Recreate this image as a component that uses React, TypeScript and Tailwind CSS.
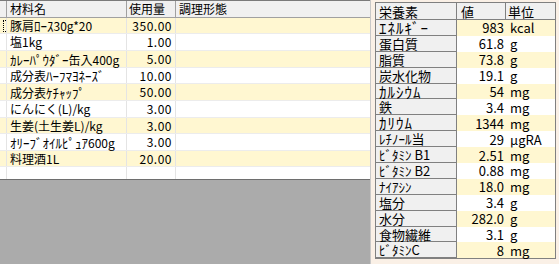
import React from "react";

const leftRows = [
  { name: "豚肩ﾛｰｽ30g*20", qty: "350.00", h: "h-[16px]" },
  { name: "塩1kg", qty: "1.00", h: "h-[17px]" },
  { name: "ｶﾚｰﾊﾟｳﾀﾞｰ缶入400g", qty: "5.00", h: "h-[17px]" },
  { name: "成分表ﾊｰﾌﾏﾖﾈｰｽﾞ", qty: "10.00", h: "h-[16px]" },
  { name: "成分表ｹﾁｬｯﾌﾟ", qty: "50.00", h: "h-[17px]" },
  { name: "にんにく(L)/kg", qty: "3.00", h: "h-[17px]" },
  { name: "生姜(土生姜L)/kg", qty: "3.00", h: "h-[16px]" },
  { name: "ｵﾘｰﾌﾞｵｲﾙﾋﾟｭｱ600g", qty: "3.00", h: "h-[17px]" },
  { name: "料理酒1L", qty: "20.00", h: "h-[16px]" },
];

const wide = "text-[15px] tracking-[1px]";
const narrow = "text-[13px]";

const nutrients = [
  { n: "ｴﾈﾙｷﾞｰ", v: "983", u: "kcal", k: wide },
  { n: "蛋白質", v: "61.8", u: "g", k: wide },
  { n: "脂質", v: "73.8", u: "g", k: wide },
  { n: "炭水化物", v: "19.1", u: "g", k: wide },
  { n: "ｶﾙｼｳﾑ", v: "54", u: "mg", k: wide },
  { n: "鉄", v: "3.4", u: "mg", k: wide },
  { n: "ｶﾘｳﾑ", v: "1344", u: "mg", k: wide },
  { n: "ﾚﾁﾉｰﾙ当", v: "29", u: "μgRA", k: narrow },
  { n: "ﾋﾞﾀﾐﾝ B1", v: "2.51", u: "mg", k: narrow },
  { n: "ﾋﾞﾀﾐﾝ B2", v: "0.88", u: "mg", k: narrow },
  { n: "ﾅｲｱｼﾝ", v: "18.0", u: "mg", k: narrow },
  { n: "塩分", v: "3.4", u: "g", k: wide },
  { n: "水分", v: "282.0", u: "g", k: wide },
  { n: "食物繊維", v: "3.1", u: "g", k: wide },
  { n: "ﾋﾞﾀﾐﾝC", v: "8", u: "mg", k: narrow },
];

function Kana({ text, cls }: { text: string; cls: string }) {
  const parts = text.split(/([\uFF61-\uFF9F]+)/);
  return (
    <>
      {parts.map((p, i) =>
        /^[\uFF61-\uFF9F]+$/.test(p) ? (
          <span key={i} className={cls}>
            {p}
          </span>
        ) : (
          <React.Fragment key={i}>{p}</React.Fragment>
        )
      )}
    </>
  );
}

export default function App() {
  return (
    <div className="w-[559px] h-[264px] bg-[#faf0e6] flex overflow-hidden font-['Noto_Sans_CJK_JP',sans-serif] text-black">
      {/* Left grid */}
      <div className="w-[371px] h-full flex flex-col border-r border-[#c8c8c8]">
        <div className="h-[179px] bg-white flex flex-col border-t border-[#7a7a7a]">
          <div className="h-[17px] flex bg-[#f0f0f0] border-b border-[#a0a0a0] text-[12px] leading-none">
            <div className="w-[7px] border-r border-[#a0a0a0]" />
            <div className="w-[120px] border-r border-[#a0a0a0] pl-[3px] flex items-center">材料名</div>
            <div className="w-[49px] border-r border-[#a0a0a0] pl-[2px] flex items-center">使用量</div>
            <div className="flex-1 pl-[3px] flex items-center">調理形態</div>
          </div>
          {leftRows.map((r, i) => (
            <div
              key={i}
              className={`${r.h} flex text-[12px] leading-none border-b border-[#ececec] ${
                i % 2 === 0 ? "bg-[#fff7d1]" : "bg-white"
              }`}
            >
              <div className="w-[7px] border-r border-[#e4e4e4] relative">
                {i === 0 && (
                  <div className="absolute left-[3px] top-[2px] bottom-[1px] w-[3px] border-l border-t border-b border-dotted border-black" />
                )}
              </div>
              <div className="w-[120px] border-r border-[#e4e4e4] pl-[3px] flex items-center whitespace-nowrap">
                <span>
                  <Kana text={r.name} cls="text-[13px]" />
                </span>
              </div>
              <div className="w-[49px] border-r border-[#e4e4e4] pr-[3px] flex items-center justify-end tracking-[0.5px]">
                {r.qty}
              </div>
              <div className="flex-1" />
            </div>
          ))}
          <div className="flex-1 flex">
            <div className="w-[7px] border-r border-[#e4e4e4]" />
            <div className="w-[120px] border-r border-[#e4e4e4]" />
            <div className="w-[49px] border-r border-[#e4e4e4]" />
            <div className="flex-1" />
          </div>
        </div>
        <div className="flex-1 bg-[#ababab] border-t border-[#6e6e6e]" />
      </div>

      {/* Right grid */}
      <div className="ml-[4px] mt-[2px] w-[181px] self-start border border-[#808080] bg-white text-[13px] leading-none">
        <div className="h-[17px] flex bg-[#f0f0f0] border-b border-[#808080]">
          <div className="w-[81px] border-r border-[#808080] pl-[3px] flex items-center">栄養素</div>
          <div className="w-[49px] border-r border-[#808080] pl-[4px] flex items-center">値</div>
          <div className="flex-1 pl-[2px] flex items-center">単位</div>
        </div>
        {nutrients.map((r, i) => (
          <div key={i} className={`h-[15.9px] flex ${i % 2 === 0 ? "bg-[#fff7d1]" : "bg-white"}`}>
            <div className="w-[81px] bg-[#f0f0f0] border-r border-b border-[#808080] pl-[3px] flex items-center whitespace-nowrap">
              <span>
                <Kana text={r.n} cls={r.k} />
              </span>
            </div>
            <div className="w-[49px] pr-[2px] flex items-center justify-end">{r.v}</div>
            <div className="flex-1 pl-[4px] flex items-center">{r.u}</div>
          </div>
        ))}
      </div>
    </div>
  );
}
